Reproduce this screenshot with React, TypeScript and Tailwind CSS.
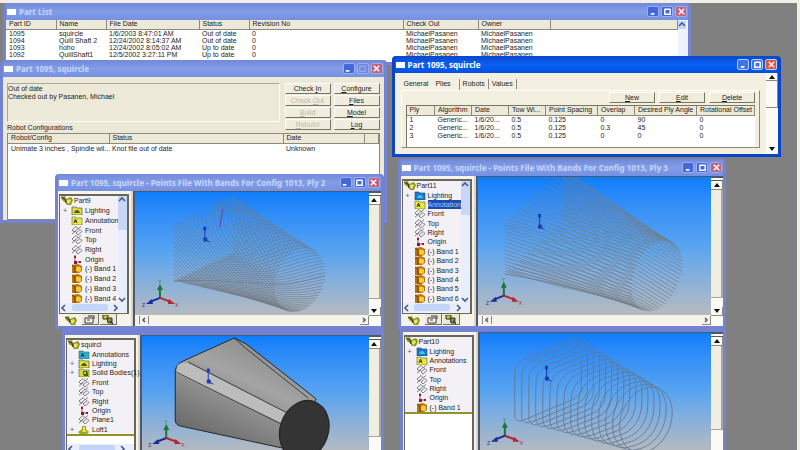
import type { ReactNode } from "react";
import clsx from "clsx";

type Point = [number, number];

const parts = [
  ["1095", "squircle", "1/6/2003 8:47:01 AM", "Out of date", "0", "MichaelPasanen", "MichaelPasanen"],
  ["1094", "Quill Shaft 2", "12/24/2002 8:14:37 AM", "Out of date", "0", "MichaelPasanen", "MichaelPasanen"],
  ["1093", "hoho", "12/24/2002 8:05:02 AM", "Up to date", "0", "MichaelPasanen", "MichaelPasanen"],
  ["1092", "QuillShaft1", "12/5/2002 3:27:11 PM", "Up to date", "0", "MichaelPasanen", "MichaelPasanen"],
];

const plies = [
  ["1", "Generic...", "1/6/20...", "0.5", "0.125", "0", "90", "0"],
  ["2", "Generic...", "1/6/20...", "0.5", "0.125", "0.3", "45", "0"],
  ["3", "Generic...", "1/6/20...", "0.5", "0.125", "0", "0", "0"],
];

/* ---------- window chrome ---------- */

function TitleButton({ kind, active, faded }: { kind: "min" | "max" | "close"; active?: boolean; faded?: boolean }) {
  return (
    <button
      type="button"
      aria-label={kind}
      className={clsx(
        "flex h-[11px] w-[12px] items-center justify-center rounded-[2px] border",
        active ? "border-[#b8cdfa]" : "border-[#98aef0]",
        kind === "close" && (active ? "bg-[#e0563a]" : "bg-[#c4627c]"),
        kind !== "close" && (active ? "bg-[#3d74ea]" : faded ? "bg-[#7088e0]" : "bg-[#4468da]")
      )}
    >
      <svg viewBox="0 0 10 10" className="h-[9px] w-[9px]" fill="none" stroke={faded ? "#94a8ee" : "#fff"} strokeWidth={1.6}>
        {kind === "min" && <path d="M2 7.6h4" strokeWidth={2} />}
        {kind === "max" && <path d="M2 2.5h6M2 2v6h6V2" />}
        {kind === "close" && <path d="M2 2l6 6M8 2l-6 6" />}
      </svg>
    </button>
  );
}

interface WindowProps {
  title: string;
  place: string;
  active?: boolean;
  noMax?: boolean;
  children: ReactNode;
}

function Window({ title, place, active, noMax, children }: WindowProps) {
  return (
    <section
      className={clsx(
        "absolute flex flex-col overflow-hidden rounded-t-[4px] border-x-[3px] border-b-[3px]",
        active ? "border-[#0a43cc] bg-[#0a58ea]" : "border-[#7482d2] bg-[#7b96e2]",
        place
      )}
    >
      <header
        className={clsx(
          "flex h-[17px] shrink-0 items-center gap-[3px] px-px",
          active
            ? "bg-linear-to-b from-[#0a48cc] via-[#0860f4] to-[#0650e0]"
            : "bg-linear-to-b from-[#7288d8] via-[#829ee8] to-[#7690e0]"
        )}
      >
        <span className="h-[6px] w-[9px] shrink-0 bg-white" />
        <h2
          className={clsx(
            "min-w-0 flex-1 truncate font-['Noto_Sans',sans-serif] text-[8px] leading-[12px] font-bold",
            active ? "text-white" : "text-[#c6d5fb]"
          )}
        >
          {title}
        </h2>
        <div className="flex gap-[2px]">
          <TitleButton kind="min" active={active} />
          <TitleButton kind="max" active={active} faded={noMax} />
          <TitleButton kind="close" active={active} />
        </div>
      </header>
      {children}
    </section>
  );
}

function DataTable({ heads, rows, widths, rowClass }: { heads: string[]; rows: string[][]; widths: string[]; rowClass: string }) {
  return (
    <table className="w-full table-fixed bg-white text-left">
      <colgroup>
        {widths.map((w, i) => (
          <col key={i} className={w} />
        ))}
      </colgroup>
      <thead>
        <tr className="h-[9px] bg-[#ece9d8] leading-[8px]">
          {heads.map((h, i) => (
            <th key={i} className="border-r border-b border-[#8d8a7c] p-0 pl-[3px] font-normal whitespace-nowrap">
              {h}
            </th>
          ))}
        </tr>
      </thead>
      <tbody>
        {rows.map((row, i) => (
          <tr key={i} className={rowClass}>
            {row.map((cell, j) => (
              <td key={j} className="p-0 pl-[3px] whitespace-nowrap">
                {cell}
              </td>
            ))}
          </tr>
        ))}
      </tbody>
    </table>
  );
}

function Chevron({ d, className }: { d: string; className?: string }) {
  return (
    <svg viewBox="0 0 8 8" className={clsx("size-[8px] shrink-0", className)} fill="none" stroke="#46598c" strokeWidth={1.6}>
      <path d={d} />
    </svg>
  );
}

function Arrow({ up }: { up?: boolean }) {
  return (
    <svg viewBox="0 0 6 4" className="h-[4px] w-[6px]">
      <path d={up ? "M3 0l3 4H0z" : "M3 4l3-4H0z"} fill="#111" />
    </svg>
  );
}

/* ---------- feature tree ---------- */

type IconName = "part" | "light" | "lightBlue" | "note" | "noteBlue" | "solid" | "plane" | "origin" | "band" | "loft";

function TreeIcon({ name }: { name: IconName }) {
  return (
    <svg viewBox="0 0 12 9" className="h-[9px] w-[12px] shrink-0">
      {name === "part" && (
        <>
          <path d="M0 1l4-1 1 3 5-2 2 3-2 5H6L4 6 1 4z" fill="#8c9420" />
          <path d="M6 4l3-1 1 2-2 3-2-1z" fill="#e8e070" />
          <path d="M0 1l4 2 1 4" fill="none" stroke="#33380c" />
        </>
      )}
      {(name === "light" || name === "lightBlue") && (
        <>
          <path d="M1 1h4l1 1h5v7H1z" fill={name === "light" ? "#e4dc3c" : "#1a78d8"} stroke="#34444c" strokeWidth=".6" />
          <path d="M3 7c1-4 5-4 6 0z" fill={name === "light" ? "#4c5c14" : "#34d0e0"} />
        </>
      )}
      {(name === "note" || name === "noteBlue") && (
        <>
          <path d="M1 1h4l1 1h5v7H1z" fill={name === "note" ? "#ece840" : "#28b4d8"} stroke="#50642c" strokeWidth=".6" />
          <path d="M3 7l1.500-4 1.500 4M4 5.500h1.500" fill="none" stroke="#243c40" />
        </>
      )}
      {name === "solid" && (
        <>
          <path d="M1 1h4l1 1h5v7H1z" fill="#dcd83c" stroke="#54601c" strokeWidth=".6" />
          <path d="M5 3h4l1 2v3H6L5 6z" fill="#3c641c" />
          <path d="M6 4h2v2H6z" fill="#c4dc4c" />
        </>
      )}
      {name === "plane" && (
        <path d="M1 4l4-3.500 2 2-4 3.500zM5 7l4-3.500 2 2L7 9zM1 8l4-3M7 3l3-2.500" fill="none" stroke="#5f5f5f" strokeWidth=".8" />
      )}
      {name === "origin" && (
        <>
          <path d="M4 0v7h6" fill="none" stroke="#a04858" />
          <path d="M3 6h3v3H3zM8 6h2v2H8zM3 1h2v2H3z" fill="#8c1c34" />
        </>
      )}
      {name === "band" && (
        <>
          <path d="M1 1l6-1 4 2v5L8 9H1z" fill="#b87414" />
          <path d="M5 4c0-2 4-2 5 0v3l-2 1-3-1z" fill="#f4cc34" />
          <path d="M1 1l3 2v6" fill="none" stroke="#6c3c0c" />
        </>
      )}
      {name === "loft" && (
        <>
          <path d="M4 1h4v3l3 3-2 2H2L0 7l4-3z" fill="#a0a820" />
          <path d="M5 2h2v3l2 2H4l1-2z" fill="#ece44c" />
        </>
      )}
    </svg>
  );
}

interface TreeItem {
  icon: IconName;
  label: string;
  expand?: boolean;
  selected?: boolean;
}

const planes: TreeItem[] = [
  { icon: "plane", label: "Front" },
  { icon: "plane", label: "Top" },
  { icon: "plane", label: "Right" },
  { icon: "origin", label: "Origin" },
];

function bands(count: number): TreeItem[] {
  return Array.from({ length: count }, (_, i) => ({ icon: "band", label: `(-) Band ${i + 1}` }));
}

function Tree({ root, items, height }: { root: string; items: TreeItem[]; height: string }) {
  return (
    <ul className={clsx("grid min-w-0 flex-1 auto-rows-fr leading-[9px]", height)}>
      <li className="flex items-center gap-px pl-px whitespace-nowrap">
        <TreeIcon name="part" />
        {root}
      </li>
      {items.map((item) => (
        <li key={item.label} className="flex items-center gap-[2px] whitespace-nowrap">
          <span className="w-[9px] shrink-0 pr-[2px] text-right text-[#4c5470]">{item.expand ? "+" : ""}</span>
          <TreeIcon name={item.icon} />
          <span className={clsx(item.selected && "flex-1 bg-[#1c4cae] text-[#b4c8f4]")}>{item.label}</span>
        </li>
      ))}
    </ul>
  );
}

function HScroll() {
  return (
    <div className="flex h-[9px] items-center justify-between bg-[#e8eefc]">
      <Chevron d="M5 1L2 4l3 3" />
      <span className="h-[7px] w-[36px] rounded-[2px] bg-[#c4d4fa]" />
      <Chevron d="M3 1l3 3-3 3" className="mr-2" />
    </div>
  );
}

function PanelTabs() {
  return (
    <div className="flex h-[12px] items-start gap-px pl-[2px]">
      <span className="px-1 pt-[2px]">
        <TreeIcon name="part" />
      </span>
      <span className="border-r border-b border-[#77745f] bg-[#ece9d8] px-[2px] pt-px">
        <svg viewBox="0 0 12 9" className="h-[9px] w-[12px]">
          <path d="M1 3h8v5H1z" fill="#fff" stroke="#333" />
          <path d="M4 1h6v3M3 5h3" fill="none" stroke="#333" />
        </svg>
      </span>
      <span className="border-r border-b border-[#77745f] bg-[#ece9d8] px-[2px] pt-px">
        <svg viewBox="0 0 12 9" className="h-[9px] w-[12px]">
          <path d="M1 0h5v4H1z" fill="#c8c434" stroke="#333" />
          <path d="M5 3h5v5H6z" fill="#86942c" stroke="#333" />
          <path d="M8 6l3 3" stroke="#111" />
        </svg>
      </span>
    </div>
  );
}

/* ---------- 3D views ---------- */

interface Loft {
  // bottom left, top left and apex corners of the back face
  back: [Point, Point, Point];
  center: Point;
  radius: Point;
}

const TILT = (22 * Math.PI) / 180;

function squared(v: number, rounded: boolean) {
  const size = rounded ? Math.abs(v) ** 0.35 * 1.04 : Math.abs(v) * Math.SQRT2;
  return Math.sign(v) * Math.min(1, size);
}

// Point on the loft between the square back face (s = 0) and the round front face (s = 1)
function loftPoint({ back: [a, b, c], center, radius }: Loft, s: number, t: number, rounded = false): Point {
  const angle = 0.75 * Math.PI + t * 2 * Math.PI;
  const u = squared(Math.cos(angle), rounded);
  const v = squared(Math.sin(angle), rounded);
  const bx = (a[0] + c[0]) / 2 + (u * (c[0] - b[0])) / 2 + (v * (a[0] - b[0])) / 2;
  const by = (a[1] + c[1]) / 2 + (u * (c[1] - b[1])) / 2 + (v * (a[1] - b[1])) / 2;
  const ex = radius[0] * Math.cos(angle - TILT);
  const ey = radius[1] * Math.sin(angle - TILT);
  const fx = center[0] + ex * Math.cos(TILT) - ey * Math.sin(TILT);
  const fy = center[1] + ex * Math.sin(TILT) + ey * Math.cos(TILT);
  return [bx + (fx - bx) * s, by + (fy - by) * s];
}

function toPath(points: Point[]) {
  return "M" + points.map(([x, y]) => `${x.toFixed(1)} ${y.toFixed(1)}`).join("L");
}

function range(n: number) {
  return Array.from({ length: n + 1 }, (_, i) => i / n);
}

function HelixBands({ loft }: { loft: Loft }) {
  const paths = range(60).map((t0) => toPath(range(30).map((s) => loftPoint(loft, s, t0 - s * 0.38))));
  return <path d={paths.join("")} fill="none" stroke="#737c86" strokeWidth={0.7} />;
}

function AxialBands({ loft }: { loft: Loft }) {
  const paths = range(60).map((t0) => toPath(range(10).map((s) => loftPoint(loft, s, t0 - s * 0.04))));
  return <path d={paths.join("")} fill="none" stroke="#757d86" strokeWidth={0.7} />;
}

function HoopBands({ loft }: { loft: Loft }) {
  const paths = range(15).map((s) => toPath(range(96).map((t) => loftPoint(loft, s, t, true))));
  return <path d={paths.join("")} fill="none" stroke="#66788c" strokeWidth={0.9} strokeLinejoin="round" />;
}

function Solid() {
  return (
    <g stroke="#26282a" strokeLinejoin="round">
      <path d="M33 35Q34 28 41 25L92 2L104 8L174 63L140 112L38 90Q33 89 33 84z" fill="url(#body)" />
      <path d="M35 30Q38 26 46 27L148 79L139 87L34 37z" fill="#bcbcbc" stroke="none" />
      <path d="M46 26L149 79M34 36L141 89M92 2L103 12L166 62" fill="none" strokeWidth={0.8} />
      <ellipse cx="162" cy="94" rx="24" ry="30" transform="rotate(20 162 94)" fill="#343434" strokeWidth={1.4} />
    </g>
  );
}

function Triad({ x, y }: { x: number; y: number }) {
  return (
    <g transform={`translate(${x} ${y})`} strokeWidth={2} fill="none">
      <path d="M0 0V-10" stroke="#187838" />
      <path d="M-3 -8L0 -14L3 -8z" fill="#187838" />
      <path d="M0 0L-10 4" stroke="#1c2c9c" />
      <path d="M-8 1L-14 6L-7 6z" fill="#1c2c9c" />
      <path d="M0 0L11 4" stroke="#b82434" />
      <path d="M9 1L15 6L8 6z" fill="#b82434" />
      <g stroke="none" fontSize={5}>
        <text x={-2} y={-14} fill="#187838">Y</text>
        <text x={-18} y={9} fill="#1c2c9c">Z</text>
        <text x={15} y={9} fill="#b82434">X</text>
      </g>
    </g>
  );
}

function OriginMark({ x, y }: { x: number; y: number }) {
  return (
    <g transform={`translate(${x} ${y})`} stroke="#1c3cb4" fill="#1c3cb4">
      <path d="M0 0V-13M0 0L5 2" fill="none" />
      <path d="M-1 -13h2v3h-2zM-1 -2h3v3h-3z" />
    </g>
  );
}

interface ViewProps {
  root: string;
  items: TreeItem[];
  treeHeight: string;
  scrolls?: boolean;
  footer?: boolean;
  viewBox: string;
  canvasHeight: string;
  thumb: string;
  bottomRule?: string;
  children: ReactNode;
}

function PartView({ root, items, treeHeight, scrolls, footer, viewBox, canvasHeight, thumb, bottomRule, children }: ViewProps) {
  return (
    <div className="flex flex-1 bg-[#f6f4ea]">
      <div className="flex w-[75px] shrink-0 flex-col border-r-2 border-[#d8d5c8] pt-[3px] pr-[2px] pl-px">
        <div className="flex flex-1 flex-col border-t-2 border-r-2 border-b border-l border-[#69675a] bg-[#f3f1f6]">
          <div className="flex">
            <Tree root={root} items={items} height={treeHeight} />
            {scrolls && (
              <div className="z-10 flex w-[9px] shrink-0 flex-col justify-between bg-[#e8eefc]">
                <div className="h-[34px] bg-[#c8d6fa]">
                  <Chevron d="M1 5l3-3 3 3" />
                </div>
                <Chevron d="M1 3l3 3 3-3" />
              </div>
            )}
          </div>
          {scrolls && <HScroll />}
          {bottomRule && (
            <div className="flex flex-1 flex-col border-t-2 border-[#8f9428] bg-white pt-[8px]">
              {bottomRule === "scroll" && <HScroll />}
            </div>
          )}
        </div>
        {footer && <PanelTabs />}
      </div>
      <div className="flex min-w-0 flex-1 flex-col border-t border-l-2 border-[#4c5870]">
        <svg
          viewBox={viewBox}
          preserveAspectRatio="xMidYMid meet"
          className={clsx("w-full bg-linear-to-b from-[#0c7efc] via-[#58a4f0] to-[#b6babf]", canvasHeight)}
        >
          {children}
        </svg>
        {footer && (
          <div className="flex h-[10px] items-center justify-between bg-[#f6f4ea] pl-1">
            <span className="border-x border-[#8d8a7c]">
              <Chevron d="M5 2L3 4l2 2" />
            </span>
            <span className="border-r border-b border-[#8d8a7c]">
              <Chevron d="M3 2l2 2-2 2" />
            </span>
          </div>
        )}
      </div>
      <div className="flex w-[12px] shrink-0 flex-col items-center border-t-2 border-[#4c5870] bg-[#fbfaf4]">
        <div className="h-[3px] w-full border-b border-[#5c5a4c]" />
        <div className="flex h-[9px] w-full items-center justify-center border-r border-b border-[#8d8a7c]">
          <Arrow up />
        </div>
        <div className={clsx("w-full border-r-2 border-b border-[#a8a594] bg-[#f0eee0]", thumb)} />
        {footer && (
          <div className="mt-auto mb-[10px] flex h-[9px] w-full items-center justify-center border-r border-b border-[#8d8a7c]">
            <Arrow />
          </div>
        )}
      </div>
    </div>
  );
}

/* ---------- dialogs ---------- */

function PushButton({ hotkey, before = "", after = "", disabled }: { hotkey: string; before?: string; after?: string; disabled?: boolean }) {
  return (
    <button
      type="button"
      disabled={disabled}
      className="h-[11px] min-w-[46px] border border-t-white border-r-[#77745f] border-b-[#77745f] border-l-white bg-[#f0eddf] text-center leading-[8px] disabled:text-[#bcb8a6]"
    >
      {before}
      <u>{hotkey}</u>
      {after}
    </button>
  );
}

export default function App() {
  return (
    <main className="relative h-screen w-full overflow-hidden border-t-[3px] border-r-[3px] border-[#f1efe6] bg-[#808080] font-['Liberation_Sans',sans-serif] text-[7px] text-[#1c1c1c]">
      <Window title="Part List" place="top-0 right-[106px] left-[3px] h-[62px]">
        <div className="flex flex-1 bg-white">
          <div className="min-w-0 flex-1">
            <DataTable
              heads={["Part ID", "Name", "File Date", "Status", "Revision No", "Check Out", "Owner", ""]}
              rows={parts}
              widths={["w-[50px]", "w-[50px]", "w-[93px]", "w-[50px]", "w-[154px]", "w-[75px]", "w-[72px]", "w-auto"]}
              rowClass="h-[7px] leading-[7px]"
            />
          </div>
          <div className="flex w-[10px] flex-col justify-between bg-[#eef2fc] pt-px">
            <Chevron d="M1 5l3-3 3 3" className="bg-[#c8d6fa]" />
            <Chevron d="M1 3l3 3 3-3" />
          </div>
        </div>
      </Window>

      <Window title="Part 1095, squircle" noMax place="top-[57px] right-[calc(50%+12px)] left-0 h-[163px]">
        <div className="flex flex-1 flex-col bg-[#ece9d8] px-[4px] pt-[6px]">
          <div className="flex gap-[5px]">
            <div className="h-[39px] flex-1 border border-[#aca899] border-r-white border-b-white pt-px leading-[8px]">
              <p>Out of date</p>
              <p>Checked out by Pasanen, Michael</p>
            </div>
            <div className="grid grid-cols-2 gap-x-[3px] gap-y-px">
              <PushButton before="Check " hotkey="I" after="n" />
              <PushButton hotkey="C" after="onfigure" />
              <PushButton before="Check " hotkey="O" after="ut" disabled />
              <PushButton hotkey="F" after="iles" />
              <PushButton hotkey="B" after="uild" disabled />
              <PushButton hotkey="M" after="odel" />
              <PushButton hotkey="R" after="ebuild" disabled />
              <PushButton hotkey="L" after="og" />
            </div>
          </div>
          <p className="-mt-[6px] pb-px leading-[8px]">Robot Configurations</p>
          <div className="flex-1 border border-[#8d8a7c] bg-white">
            <DataTable
              heads={["Robot/Config", "Status", "Date", ""]}
              rows={[["Unimate 3 inches , Spindle wil...", "Knot file out of date", "Unknown", ""]]}
              widths={["w-[101px]", "w-[174px]", "w-[81px]", "w-auto"]}
              rowClass="h-[9px] leading-[9px]"
            />
          </div>
        </div>
      </Window>

      <Window
        title="Part 1095, squircle - Points File With Bands For Config 1013, Ply 3"
        place="top-[156px] right-[71px] left-[calc(50%-1px)] h-[170px]"
      >
        <PartView
          root="Part11"
          items={[
            { icon: "lightBlue", label: "Lighting", expand: true },
            { icon: "note", label: "Annotation", selected: true },
            ...planes,
            ...bands(6),
          ]}
          treeHeight="h-[122px]"
          scrolls
          footer
          viewBox="0 0 235 138"
          canvasHeight="h-[138px]"
          thumb="h-[108px]"
        >
          <AxialBands loft={{ back: [[27, 97], [27, 45], [86, -10]], center: [180, 99], radius: [23, 37] }} />
          <OriginMark x={62} y={50} />
          <Triad x={26} y={119} />
        </PartView>
      </Window>

      <Window
        title="Part 1095, squircle - Points File With Bands For Config 1013, Ply 2"
        place="top-[171px] right-[calc(50%+15px)] left-[55px] h-[155px]"
      >
        <PartView
          root="Part9"
          items={[
            { icon: "light", label: "Lighting", expand: true },
            { icon: "note", label: "Annotation" },
            ...planes,
            ...bands(4),
          ]}
          treeHeight="h-[107px]"
          scrolls
          footer
          viewBox="0 0 234 123"
          canvasHeight="h-[123px]"
          thumb="h-[94px]"
        >
          <HelixBands loft={{ back: [[39, 89], [39, 31], [98, 3]], center: [165, 88], radius: [24, 33] }} />
          <path d="M88 17L85 35" stroke="#7c3c8c" />
          <OriginMark x={70} y={48} />
          <Triad x={25} y={106} />
        </PartView>
      </Window>

      <Window title="Part 1095, squircle" active place="top-[53px] right-[16px] left-[calc(50%-7px)] h-[101px]">
        <div className="flex flex-1 bg-[#f3f0e2]">
          <div className="flex min-w-0 flex-1 flex-col px-[6px] pt-[5px] pb-[6px]">
            <nav className="flex h-[12px] items-center leading-[10px]">
              {["General", "Plies", "Robots", "Values"].map((tab) => (
                <button
                  key={tab}
                  type="button"
                  className={clsx("border-r px-[3px]", tab === "General" ? "border-transparent" : "border-[#8d8a7c]", tab === "Plies" && "pr-[8px] pb-px")}
                >
                  {tab}
                </button>
              ))}
            </nav>
            <div className="flex flex-1 flex-col gap-[2px] border border-t-white border-r-[#8d8a7c] border-b-[#8d8a7c] border-l-white px-[4px] pt-px">
              <div className="flex justify-end gap-[4px]">
                <PushButton hotkey="N" after="ew" />
                <PushButton hotkey="E" after="dit" />
                <PushButton hotkey="D" after="elete" />
              </div>
              <div className="flex-1 border-t border-l border-[#77745f] bg-white">
                <DataTable
                  heads={["Ply", "Algorithm", "Date", "Tow Wi...", "Point Spacing", "Overlap", "Desired Ply Angle", "Rotational Offset"]}
                  rows={plies}
                  widths={["w-[28px]", "w-[37px]", "w-[37px]", "w-[37px]", "w-[52px]", "w-[37px]", "w-[62px]", "w-auto"]}
                  rowClass="h-[8px] leading-[8px]"
                />
              </div>
            </div>
          </div>
          <div className="flex w-[12px] flex-col items-center justify-between bg-[#fbfaf4] pb-[3px]">
            <div className="flex h-[35px] w-full flex-col border-r border-b border-[#8d8a7c]">
              <span className="flex h-[8px] items-center justify-center border-b border-[#8d8a7c]">
                <Arrow up />
              </span>
            </div>
            <Arrow />
          </div>
        </div>
      </Window>

      <section className="absolute top-[326px] right-[calc(50%+15px)] bottom-0 left-[62px] flex flex-col overflow-hidden border-x-[3px] border-t-[6px] border-[#7482d2]">
        <PartView
          root="squircl"
          items={[
            { icon: "noteBlue", label: "Annotations" },
            { icon: "light", label: "Lighting", expand: true },
            { icon: "solid", label: "Solid Bodies(1)", expand: true },
            ...planes,
            { icon: "plane", label: "Plane1" },
            { icon: "loft", label: "Loft1", expand: true },
          ]}
          treeHeight="h-[94px]"
          viewBox="0 0 226 116"
          canvasHeight="h-[116px]"
          thumb="h-[88px]"
          bottomRule="scroll"
        >
          <defs>
            <linearGradient id="body" x1="1" y1="0" x2="0.400" y2="1">
              <stop offset="0" stopColor="#7c7c7c" />
              <stop offset="0.500" stopColor="#a4a4a4" />
              <stop offset="1" stopColor="#6c6c6c" />
            </linearGradient>
          </defs>
          <Solid />
          <OriginMark x={66} y={46} />
          <Triad x={24} y={102} />
        </PartView>
      </section>

      <section className="absolute top-[326px] right-[71px] bottom-0 left-[calc(50%+1px)] flex flex-col overflow-hidden border-x-[3px] border-t-[3px] border-[#7482d2]">
        <PartView
          root="Part10"
          items={[
            { icon: "lightBlue", label: "Lighting", expand: true },
            { icon: "note", label: "Annotations" },
            ...planes,
            { icon: "band", label: "(-) Band 1" },
          ]}
          treeHeight="h-[75px]"
          viewBox="0 0 233 119"
          canvasHeight="h-[119px]"
          thumb="h-[84px]"
          bottomRule="plain"
        >
          <HoopBands loft={{ back: [[35, 91], [35, 30], [102, 2]], center: [167, 87], radius: [25, 34] }} />
          <OriginMark x={67} y={46} />
          <Triad x={25} y={103} />
        </PartView>
      </section>
    </main>
  );
}
